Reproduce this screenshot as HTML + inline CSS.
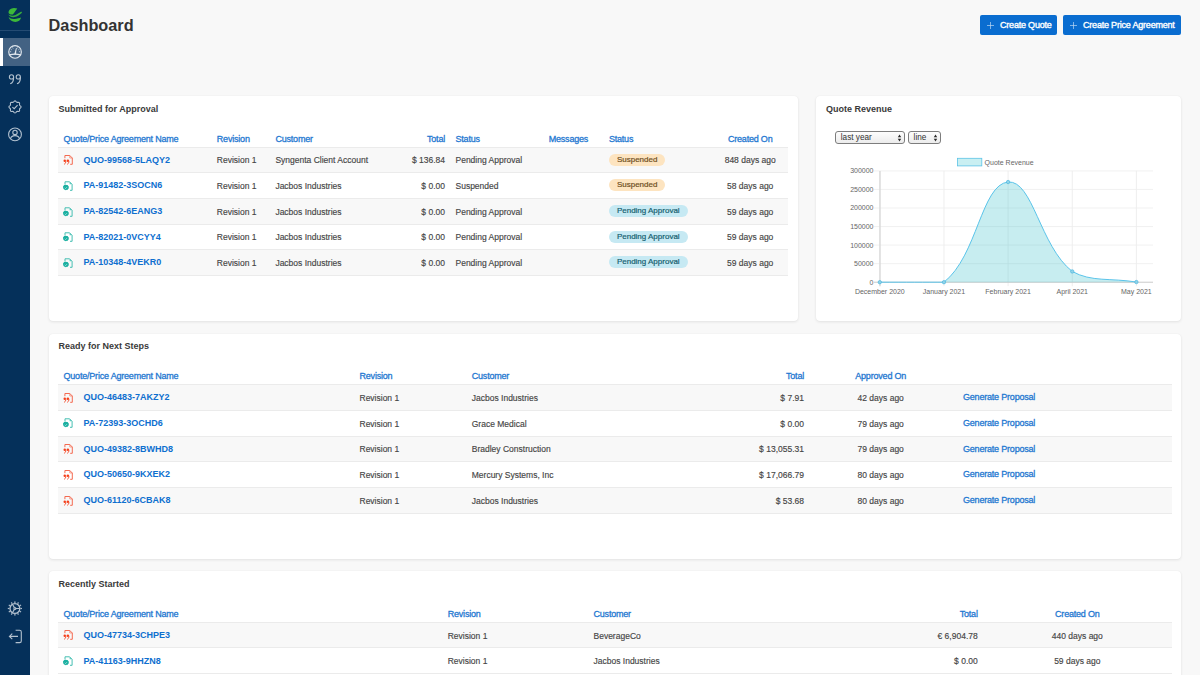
<!DOCTYPE html>
<html><head><meta charset="utf-8"><style>
*{box-sizing:border-box;margin:0;padding:0}
html,body{width:1200px;height:675px;overflow:hidden;background:#f8f8f8;font-family:"Liberation Sans",sans-serif;position:relative}
.sb{position:absolute;left:0;top:0;width:30px;height:675px;background:#05305a}
.card{position:absolute;background:#fff;border-radius:4px;box-shadow:0 1px 3px rgba(0,0,0,0.09),0 0 1px rgba(0,0,0,0.06)}
.t{position:absolute;white-space:nowrap;line-height:0;height:0}
.c{text-align:center}
.hdr{font:9px "Liberation Sans",sans-serif;color:#1f78d1;letter-spacing:-0.2px;-webkit-text-stroke:0.3px #1f78d1}
.link{font:bold 9px "Liberation Sans",sans-serif;color:#0e6fcf}
.gen{font:9px "Liberation Sans",sans-serif;color:#1f78d1;letter-spacing:-0.2px;-webkit-text-stroke:0.3px #1f78d1}
.body{font:8.5px "Liberation Sans",sans-serif;color:#454545;-webkit-text-stroke:0.15px #454545}
.ttl{font:bold 9px "Liberation Sans",sans-serif;color:#3a3a3a}
.row{position:absolute}
.hl{position:absolute;height:1px;background:#ebebeb}
.ic{position:absolute}
.badge{position:absolute;height:12px;border-radius:6px;padding:0 8px;font:8px "Liberation Sans",sans-serif;line-height:12.4px;white-space:nowrap}
.bs{background:#fde4c0;color:#6f4f22;-webkit-text-stroke:0.2px #6f4f22}
.bp{background:#c6e9f3;color:#155f70;-webkit-text-stroke:0.2px #155f70}
.btn{position:absolute;top:15px;height:19.8px;background:#0a6dd0;border-radius:2px;color:#fff}
.btn span{position:absolute;top:4.8px;font:9px "Liberation Sans",sans-serif;letter-spacing:-0.2px;-webkit-text-stroke:0.35px #fff;white-space:nowrap}
.sel{position:absolute;top:130.6px;height:13px;border:0.9px solid #7d7d7d;border-radius:3px;background:linear-gradient(#fdfdfd,#ececec);font:8.2px "Liberation Sans",sans-serif;color:#333}
.sel span{position:absolute;left:4.6px;top:1.5px}
.sel i{position:absolute;top:3px;width:0;height:0;border-left:1.7px solid transparent;border-right:1.7px solid transparent}
svg text{font-family:"Liberation Sans",sans-serif;font-size:7px;fill:#666}
</style></head><body>
<div class="sb">
 <svg style="position:absolute;left:0;top:0" width="30" height="30" viewBox="0 0 30 30">
  <path d="M8.6 12.8C8.2 10.2 10.6 8 14 7.9C15.2 7.9 16.4 8.1 17.3 8.4L12.9 14.5C10.8 14.9 8.9 14.2 8.6 12.8Z" fill="#3db83a"/>
  <path d="M8.3 14.6C10.5 16 13 16.1 15.5 15L21 11.8C21.8 11.4 22.2 12.2 21.7 12.9C19.8 14.8 17.5 16.2 14.6 17C12 17.6 9.4 16.6 8.3 14.6Z" fill="#3db83a" opacity="0.9"/>
  <path d="M8.6 17.1C10 18.6 12 19.2 14.4 19C17 18.8 19.4 18.2 21.1 17.6C20.6 20.2 18.3 21.9 15.4 21.9C12 21.9 9.3 19.9 8.6 17.1Z" fill="#3db83a"/>
 </svg>
 <div style="position:absolute;left:0;top:30px;width:30px;height:1px;background:#244b73"></div>
 <div style="position:absolute;left:0;top:38px;width:30px;height:27.5px;background:#436283"></div>
 <div style="position:absolute;left:0;top:38px;width:2.8px;height:27.5px;background:#fff"></div>
 <svg style="position:absolute;left:0;top:38px" width="30" height="28" viewBox="0 38 30 28">
  <circle cx="15.05" cy="51.9" r="6.3" fill="none" stroke="#e2e8ee" stroke-width="1.15"/>
  <path d="M9.4 54.9Q15 53.3 20.7 54.9" fill="none" stroke="#e2e8ee" stroke-width="1.3"/>
  <path d="M14.2 54.4Q15.2 51 16 48L16.8 48.3Q16.1 51.5 16 54.4Z" fill="#e2e8ee"/>
  <path d="M11.15 51.76L9.95 51.72M11.74 49.83L10.72 49.20M13.10 48.52L12.50 47.48M17.00 48.52L17.60 47.48M18.36 49.83L19.38 49.20M18.95 51.76L20.15 51.72" stroke="#e2e8ee" stroke-width="0.75"/>
 </svg>
 <svg style="position:absolute;left:0;top:65px" width="31" height="80" viewBox="0 65 31 80">
  <g fill="none" stroke="#b3c1cf" stroke-width="1.1">
   <circle cx="11.5" cy="76.9" r="2.1"/><path d="M13.6 76.9Q13.8 82.4 10.2 83.8"/>
   <circle cx="18.3" cy="76.9" r="2.1"/><path d="M20.4 76.9Q20.6 82.4 17 83.8"/>
   <path d="M15.00 100.85 L15.39 100.94 L15.75 101.17 L16.07 101.51 L16.35 101.85 L16.61 102.14 L16.89 102.33 L17.22 102.39 L17.61 102.38 L18.06 102.33 L18.52 102.32 L18.94 102.41 L19.28 102.62 L19.49 102.96 L19.58 103.38 L19.57 103.84 L19.52 104.29 L19.51 104.68 L19.57 105.01 L19.76 105.29 L20.05 105.55 L20.39 105.83 L20.73 106.15 L20.96 106.51 L21.05 106.90 L20.96 107.29 L20.73 107.65 L20.39 107.97 L20.05 108.25 L19.76 108.51 L19.57 108.79 L19.51 109.12 L19.52 109.51 L19.57 109.96 L19.58 110.42 L19.49 110.84 L19.28 111.18 L18.94 111.39 L18.52 111.48 L18.06 111.47 L17.61 111.42 L17.22 111.41 L16.89 111.47 L16.61 111.66 L16.35 111.95 L16.07 112.29 L15.75 112.63 L15.39 112.86 L15.00 112.95 L14.61 112.86 L14.25 112.63 L13.93 112.29 L13.65 111.95 L13.39 111.66 L13.11 111.47 L12.78 111.41 L12.39 111.42 L11.94 111.47 L11.48 111.48 L11.06 111.39 L10.72 111.18 L10.51 110.84 L10.42 110.42 L10.43 109.96 L10.48 109.51 L10.49 109.12 L10.43 108.79 L10.24 108.51 L9.95 108.25 L9.61 107.97 L9.27 107.65 L9.04 107.29 L8.95 106.90 L9.04 106.51 L9.27 106.15 L9.61 105.83 L9.95 105.55 L10.24 105.29 L10.43 105.01 L10.49 104.68 L10.48 104.29 L10.43 103.84 L10.42 103.38 L10.51 102.96 L10.72 102.62 L11.06 102.41 L11.48 102.32 L11.94 102.33 L12.39 102.38 L12.78 102.39 L13.11 102.33 L13.39 102.14 L13.65 101.85 L13.93 101.51 L14.25 101.17 L14.61 100.94 L15.00 100.85Z"/>
   <path d="M12.4 107.1L14.2 108.7L17.6 105.2"/>
   <circle cx="15" cy="134.4" r="6.4"/>
   <circle cx="15" cy="132.4" r="2.2"/>
   <path d="M10.5 138.8Q11.2 135.6 15 135.6Q18.8 135.6 19.5 138.8"/>
  </g>
 </svg>
 <svg style="position:absolute;left:0;top:595px" width="31" height="55" viewBox="0 595 31 55">
  <g fill="none" stroke="#b3c1cf" stroke-width="1.1">
   <circle cx="14.9" cy="608.5" r="4.9" stroke-width="1.3"/>
   <circle cx="14.9" cy="608.5" r="1"/>
   <path d="M15.4 608.5L19.9 608.5M14.4 607.6L12.4 604.2M14.4 609.4L12.4 612.8"/>
   <path d="M9.4 636.4H18M12.3 633.6L9.4 636.4L12.3 639.2"/>
   <path d="M15.6 630.2H19.6Q21.3 630.2 21.3 631.9V640.9Q21.3 642.6 19.6 642.6H15.6"/>
  </g>
  <g fill="#aebccb">
   <rect x="14.3" y="601.4" width="1.2" height="1.6" transform="rotate(0 14.9 608.5)"/><rect x="14.3" y="601.4" width="1.2" height="1.6" transform="rotate(30 14.9 608.5)"/><rect x="14.3" y="601.4" width="1.2" height="1.6" transform="rotate(60 14.9 608.5)"/><rect x="14.3" y="601.4" width="1.2" height="1.6" transform="rotate(90 14.9 608.5)"/><rect x="14.3" y="601.4" width="1.2" height="1.6" transform="rotate(120 14.9 608.5)"/><rect x="14.3" y="601.4" width="1.2" height="1.6" transform="rotate(150 14.9 608.5)"/><rect x="14.3" y="601.4" width="1.2" height="1.6" transform="rotate(180 14.9 608.5)"/><rect x="14.3" y="601.4" width="1.2" height="1.6" transform="rotate(210 14.9 608.5)"/><rect x="14.3" y="601.4" width="1.2" height="1.6" transform="rotate(240 14.9 608.5)"/><rect x="14.3" y="601.4" width="1.2" height="1.6" transform="rotate(270 14.9 608.5)"/><rect x="14.3" y="601.4" width="1.2" height="1.6" transform="rotate(300 14.9 608.5)"/><rect x="14.3" y="601.4" width="1.2" height="1.6" transform="rotate(330 14.9 608.5)"/>
  </g>
 </svg>
</div>

<div class="t" style="left:48.6px;top:15.8px;font:bold 16.3px 'Liberation Sans',sans-serif;color:#333">Dashboard</div>

<div class="btn" style="left:980px;width:77px">
 <svg style="position:absolute;left:7px;top:6.5px" width="7" height="7" viewBox="0 0 7 7"><path d="M3.5 0V7M0 3.5H7" stroke="#b9d5f2" stroke-width="0.7"/></svg>
 <span style="left:20px">Create Quote</span></div>
<div class="btn" style="left:1063px;width:118px">
 <svg style="position:absolute;left:7.2px;top:6.5px" width="7" height="7" viewBox="0 0 7 7"><path d="M3.5 0V7M0 3.5H7" stroke="#b9d5f2" stroke-width="0.7"/></svg>
 <span style="left:20px">Create Price Agreement</span></div>

<div class="card" style="left:49px;top:96px;width:749px;height:225px"></div>
<div class="card" style="left:816px;top:96px;width:365px;height:225px"></div>
<div class="card" style="left:49px;top:333.6px;width:1132px;height:225.4px"></div>
<div class="card" style="left:49px;top:571.2px;width:1132px;height:200px"></div>

<div class="t ttl" style="left:58.5px;top:103.82px">Submitted for Approval</div>
<div class="t ttl" style="left:826px;top:103.82px">Quote Revenue</div>
<div class="t ttl" style="left:58.5px;top:341.32px">Ready for Next Steps</div>
<div class="t ttl" style="left:58.5px;top:578.92px">Recently Started</div>

<div class="t hdr" style="left:63.5px;top:133.52px">Quote/Price Agreement Name</div>
<div class="t hdr" style="left:216.8px;top:133.52px">Revision</div>
<div class="t hdr" style="left:275.4px;top:133.52px">Customer</div>
<div class="t hdr" style="right:755px;top:133.52px">Total</div>
<div class="t hdr" style="left:455.5px;top:133.52px">Status</div>
<div class="t hdr" style="left:548.7px;top:133.52px">Messages</div>
<div class="t hdr" style="left:608.9px;top:133.52px">Status</div>
<div class="t hdr c" style="left:650.2px;width:200px;top:133.52px">Created On</div>
<div class="row" style="left:58px;top:147.00px;width:730px;height:25.7px;background:#f8f8f8"></div>
<div class="hl" style="left:58px;top:146.50px;width:730px"></div>
<svg class="ic" style="left:63.3px;top:155.1px" width="10" height="10" viewBox="0 0 10 10"><path d="M1.9 3.2V0.5H6.8L9.3 3V9.3H7.2" fill="none" stroke="#f36248" stroke-width="0.95" stroke-linejoin="miter"/><path d="M6.8 0.5V3H9.3" fill="none" stroke="#f57a62" stroke-width="0.7"/><circle cx="1.75" cy="5.8" r="1.25" fill="#f53d18"/><path d="M2.9 5.9Q3.1 8.6 1 9.4" fill="none" stroke="#f4583a" stroke-width="0.95"/><circle cx="4.85" cy="5.8" r="1.25" fill="#f53d18"/><path d="M6 5.9Q6.2 8.6 4.1 9.4" fill="none" stroke="#f4583a" stroke-width="0.95"/></svg>
<div class="t link" style="left:83.5px;top:154.62px">QUO-99568-5LAQY2</div>
<div class="t body" style="left:216.8px;top:155.38px">Revision 1</div>
<div class="t body" style="left:275.4px;top:155.38px">Syngenta Client Account</div>
<div class="t body" style="right:755px;top:155.38px">$ 136.84</div>
<div class="t body" style="left:455.5px;top:155.38px">Pending Approval</div>
<div class="badge bs" style="left:608.9px;top:153.60px">Suspended</div>
<div class="t body c" style="left:650.2px;width:200px;top:155.38px">848 days ago</div>
<div class="row" style="left:58px;top:172.70px;width:730px;height:25.7px;background:#ffffff"></div>
<div class="hl" style="left:58px;top:172.20px;width:730px"></div>
<svg class="ic" style="left:63.3px;top:180.79999999999998px" width="10" height="10" viewBox="0 0 10 10"><path d="M2 3.6V0.8H6.6L9.1 3.3V9.3H7" fill="none" stroke="#3dbcaf" stroke-width="0.95" stroke-linejoin="miter"/><path d="M6.6 0.8V3.3H9.1Z" fill="#5fc9bf"/><path d="M2.8 3.7L3.7 4L4.6 3.9L5.1 4.7L5.8 5.4L5.7 6.3L5.9 7.2L5.2 7.8L4.8 8.7L3.8 8.8L2.8 9.3L1.9 8.8L1 8.6L0.6 7.8L0 7.1L0.2 6.2L0 5.3L0.6 4.7L1.1 3.9L2 4Z" fill="#1bb0a1"/><path d="M1.8 6.8L2.6 7.6L4 6.1" fill="none" stroke="#d9f3f0" stroke-width="0.6"/></svg>
<div class="t link" style="left:83.5px;top:180.32px">PA-91482-3SOCN6</div>
<div class="t body" style="left:216.8px;top:181.08px">Revision 1</div>
<div class="t body" style="left:275.4px;top:181.08px">Jacbos Industries</div>
<div class="t body" style="right:755px;top:181.08px">$ 0.00</div>
<div class="t body" style="left:455.5px;top:181.08px">Suspended</div>
<div class="badge bs" style="left:608.9px;top:179.30px">Suspended</div>
<div class="t body c" style="left:650.2px;width:200px;top:181.08px">58 days ago</div>
<div class="row" style="left:58px;top:198.40px;width:730px;height:25.7px;background:#f8f8f8"></div>
<div class="hl" style="left:58px;top:197.90px;width:730px"></div>
<svg class="ic" style="left:63.3px;top:206.5px" width="10" height="10" viewBox="0 0 10 10"><path d="M2 3.6V0.8H6.6L9.1 3.3V9.3H7" fill="none" stroke="#3dbcaf" stroke-width="0.95" stroke-linejoin="miter"/><path d="M6.6 0.8V3.3H9.1Z" fill="#5fc9bf"/><path d="M2.8 3.7L3.7 4L4.6 3.9L5.1 4.7L5.8 5.4L5.7 6.3L5.9 7.2L5.2 7.8L4.8 8.7L3.8 8.8L2.8 9.3L1.9 8.8L1 8.6L0.6 7.8L0 7.1L0.2 6.2L0 5.3L0.6 4.7L1.1 3.9L2 4Z" fill="#1bb0a1"/><path d="M1.8 6.8L2.6 7.6L4 6.1" fill="none" stroke="#d9f3f0" stroke-width="0.6"/></svg>
<div class="t link" style="left:83.5px;top:206.02px">PA-82542-6EANG3</div>
<div class="t body" style="left:216.8px;top:206.78px">Revision 1</div>
<div class="t body" style="left:275.4px;top:206.78px">Jacbos Industries</div>
<div class="t body" style="right:755px;top:206.78px">$ 0.00</div>
<div class="t body" style="left:455.5px;top:206.78px">Pending Approval</div>
<div class="badge bp" style="left:608.9px;top:205.00px">Pending Approval</div>
<div class="t body c" style="left:650.2px;width:200px;top:206.78px">59 days ago</div>
<div class="row" style="left:58px;top:224.10px;width:730px;height:25.7px;background:#ffffff"></div>
<div class="hl" style="left:58px;top:223.60px;width:730px"></div>
<svg class="ic" style="left:63.3px;top:232.2px" width="10" height="10" viewBox="0 0 10 10"><path d="M2 3.6V0.8H6.6L9.1 3.3V9.3H7" fill="none" stroke="#3dbcaf" stroke-width="0.95" stroke-linejoin="miter"/><path d="M6.6 0.8V3.3H9.1Z" fill="#5fc9bf"/><path d="M2.8 3.7L3.7 4L4.6 3.9L5.1 4.7L5.8 5.4L5.7 6.3L5.9 7.2L5.2 7.8L4.8 8.7L3.8 8.8L2.8 9.3L1.9 8.8L1 8.6L0.6 7.8L0 7.1L0.2 6.2L0 5.3L0.6 4.7L1.1 3.9L2 4Z" fill="#1bb0a1"/><path d="M1.8 6.8L2.6 7.6L4 6.1" fill="none" stroke="#d9f3f0" stroke-width="0.6"/></svg>
<div class="t link" style="left:83.5px;top:231.72px">PA-82021-0VCYY4</div>
<div class="t body" style="left:216.8px;top:232.48px">Revision 1</div>
<div class="t body" style="left:275.4px;top:232.48px">Jacbos Industries</div>
<div class="t body" style="right:755px;top:232.48px">$ 0.00</div>
<div class="t body" style="left:455.5px;top:232.48px">Pending Approval</div>
<div class="badge bp" style="left:608.9px;top:230.70px">Pending Approval</div>
<div class="t body c" style="left:650.2px;width:200px;top:232.48px">59 days ago</div>
<div class="row" style="left:58px;top:249.80px;width:730px;height:25.7px;background:#f8f8f8"></div>
<div class="hl" style="left:58px;top:249.30px;width:730px"></div>
<svg class="ic" style="left:63.3px;top:257.90000000000003px" width="10" height="10" viewBox="0 0 10 10"><path d="M2 3.6V0.8H6.6L9.1 3.3V9.3H7" fill="none" stroke="#3dbcaf" stroke-width="0.95" stroke-linejoin="miter"/><path d="M6.6 0.8V3.3H9.1Z" fill="#5fc9bf"/><path d="M2.8 3.7L3.7 4L4.6 3.9L5.1 4.7L5.8 5.4L5.7 6.3L5.9 7.2L5.2 7.8L4.8 8.7L3.8 8.8L2.8 9.3L1.9 8.8L1 8.6L0.6 7.8L0 7.1L0.2 6.2L0 5.3L0.6 4.7L1.1 3.9L2 4Z" fill="#1bb0a1"/><path d="M1.8 6.8L2.6 7.6L4 6.1" fill="none" stroke="#d9f3f0" stroke-width="0.6"/></svg>
<div class="t link" style="left:83.5px;top:257.42px">PA-10348-4VEKR0</div>
<div class="t body" style="left:216.8px;top:258.18px">Revision 1</div>
<div class="t body" style="left:275.4px;top:258.18px">Jacbos Industries</div>
<div class="t body" style="right:755px;top:258.18px">$ 0.00</div>
<div class="t body" style="left:455.5px;top:258.18px">Pending Approval</div>
<div class="badge bp" style="left:608.9px;top:256.40px">Pending Approval</div>
<div class="t body c" style="left:650.2px;width:200px;top:258.18px">59 days ago</div>
<div class="hl" style="left:58px;top:275.00px;width:730px"></div>
<div class="t hdr" style="left:63.5px;top:371.12px">Quote/Price Agreement Name</div>
<div class="t hdr" style="left:359.5px;top:371.12px">Revision</div>
<div class="t hdr" style="left:471.75px;top:371.12px">Customer</div>
<div class="t hdr" style="right:396px;top:371.12px">Total</div>
<div class="t hdr c" style="left:780.7px;width:200px;top:371.12px">Approved On</div>
<div class="row" style="left:58px;top:384.60px;width:1114px;height:25.7px;background:#f8f8f8"></div>
<div class="hl" style="left:58px;top:384.10px;width:1114px"></div>
<svg class="ic" style="left:63.3px;top:392.70000000000005px" width="10" height="10" viewBox="0 0 10 10"><path d="M1.9 3.2V0.5H6.8L9.3 3V9.3H7.2" fill="none" stroke="#f36248" stroke-width="0.95" stroke-linejoin="miter"/><path d="M6.8 0.5V3H9.3" fill="none" stroke="#f57a62" stroke-width="0.7"/><circle cx="1.75" cy="5.8" r="1.25" fill="#f53d18"/><path d="M2.9 5.9Q3.1 8.6 1 9.4" fill="none" stroke="#f4583a" stroke-width="0.95"/><circle cx="4.85" cy="5.8" r="1.25" fill="#f53d18"/><path d="M6 5.9Q6.2 8.6 4.1 9.4" fill="none" stroke="#f4583a" stroke-width="0.95"/></svg>
<div class="t link" style="left:83.5px;top:392.22px">QUO-46483-7AKZY2</div>
<div class="t body" style="left:359.5px;top:392.98px">Revision 1</div>
<div class="t body" style="left:471.75px;top:392.98px">Jacbos Industries</div>
<div class="t body" style="right:396px;top:392.98px">$ 7.91</div>
<div class="t body c" style="left:780.7px;width:200px;top:392.98px">42 days ago</div>
<div class="t gen" style="left:963px;top:392.22px">Generate Proposal</div>
<div class="row" style="left:58px;top:410.30px;width:1114px;height:25.7px;background:#ffffff"></div>
<div class="hl" style="left:58px;top:409.80px;width:1114px"></div>
<svg class="ic" style="left:63.3px;top:418.40000000000003px" width="10" height="10" viewBox="0 0 10 10"><path d="M2 3.6V0.8H6.6L9.1 3.3V9.3H7" fill="none" stroke="#3dbcaf" stroke-width="0.95" stroke-linejoin="miter"/><path d="M6.6 0.8V3.3H9.1Z" fill="#5fc9bf"/><path d="M2.8 3.7L3.7 4L4.6 3.9L5.1 4.7L5.8 5.4L5.7 6.3L5.9 7.2L5.2 7.8L4.8 8.7L3.8 8.8L2.8 9.3L1.9 8.8L1 8.6L0.6 7.8L0 7.1L0.2 6.2L0 5.3L0.6 4.7L1.1 3.9L2 4Z" fill="#1bb0a1"/><path d="M1.8 6.8L2.6 7.6L4 6.1" fill="none" stroke="#d9f3f0" stroke-width="0.6"/></svg>
<div class="t link" style="left:83.5px;top:417.92px">PA-72393-3OCHD6</div>
<div class="t body" style="left:359.5px;top:418.68px">Revision 1</div>
<div class="t body" style="left:471.75px;top:418.68px">Grace Medical</div>
<div class="t body" style="right:396px;top:418.68px">$ 0.00</div>
<div class="t body c" style="left:780.7px;width:200px;top:418.68px">79 days ago</div>
<div class="t gen" style="left:963px;top:417.92px">Generate Proposal</div>
<div class="row" style="left:58px;top:436.00px;width:1114px;height:25.7px;background:#f8f8f8"></div>
<div class="hl" style="left:58px;top:435.50px;width:1114px"></div>
<svg class="ic" style="left:63.3px;top:444.1px" width="10" height="10" viewBox="0 0 10 10"><path d="M1.9 3.2V0.5H6.8L9.3 3V9.3H7.2" fill="none" stroke="#f36248" stroke-width="0.95" stroke-linejoin="miter"/><path d="M6.8 0.5V3H9.3" fill="none" stroke="#f57a62" stroke-width="0.7"/><circle cx="1.75" cy="5.8" r="1.25" fill="#f53d18"/><path d="M2.9 5.9Q3.1 8.6 1 9.4" fill="none" stroke="#f4583a" stroke-width="0.95"/><circle cx="4.85" cy="5.8" r="1.25" fill="#f53d18"/><path d="M6 5.9Q6.2 8.6 4.1 9.4" fill="none" stroke="#f4583a" stroke-width="0.95"/></svg>
<div class="t link" style="left:83.5px;top:443.62px">QUO-49382-8BWHD8</div>
<div class="t body" style="left:359.5px;top:444.38px">Revision 1</div>
<div class="t body" style="left:471.75px;top:444.38px">Bradley Construction</div>
<div class="t body" style="right:396px;top:444.38px">$ 13,055.31</div>
<div class="t body c" style="left:780.7px;width:200px;top:444.38px">79 days ago</div>
<div class="t gen" style="left:963px;top:443.62px">Generate Proposal</div>
<div class="row" style="left:58px;top:461.70px;width:1114px;height:25.7px;background:#ffffff"></div>
<div class="hl" style="left:58px;top:461.20px;width:1114px"></div>
<svg class="ic" style="left:63.3px;top:469.80000000000007px" width="10" height="10" viewBox="0 0 10 10"><path d="M1.9 3.2V0.5H6.8L9.3 3V9.3H7.2" fill="none" stroke="#f36248" stroke-width="0.95" stroke-linejoin="miter"/><path d="M6.8 0.5V3H9.3" fill="none" stroke="#f57a62" stroke-width="0.7"/><circle cx="1.75" cy="5.8" r="1.25" fill="#f53d18"/><path d="M2.9 5.9Q3.1 8.6 1 9.4" fill="none" stroke="#f4583a" stroke-width="0.95"/><circle cx="4.85" cy="5.8" r="1.25" fill="#f53d18"/><path d="M6 5.9Q6.2 8.6 4.1 9.4" fill="none" stroke="#f4583a" stroke-width="0.95"/></svg>
<div class="t link" style="left:83.5px;top:469.32px">QUO-50650-9KXEK2</div>
<div class="t body" style="left:359.5px;top:470.08px">Revision 1</div>
<div class="t body" style="left:471.75px;top:470.08px">Mercury Systems, Inc</div>
<div class="t body" style="right:396px;top:470.08px">$ 17,066.79</div>
<div class="t body c" style="left:780.7px;width:200px;top:470.08px">80 days ago</div>
<div class="t gen" style="left:963px;top:469.32px">Generate Proposal</div>
<div class="row" style="left:58px;top:487.40px;width:1114px;height:25.7px;background:#f8f8f8"></div>
<div class="hl" style="left:58px;top:486.90px;width:1114px"></div>
<svg class="ic" style="left:63.3px;top:495.50000000000006px" width="10" height="10" viewBox="0 0 10 10"><path d="M1.9 3.2V0.5H6.8L9.3 3V9.3H7.2" fill="none" stroke="#f36248" stroke-width="0.95" stroke-linejoin="miter"/><path d="M6.8 0.5V3H9.3" fill="none" stroke="#f57a62" stroke-width="0.7"/><circle cx="1.75" cy="5.8" r="1.25" fill="#f53d18"/><path d="M2.9 5.9Q3.1 8.6 1 9.4" fill="none" stroke="#f4583a" stroke-width="0.95"/><circle cx="4.85" cy="5.8" r="1.25" fill="#f53d18"/><path d="M6 5.9Q6.2 8.6 4.1 9.4" fill="none" stroke="#f4583a" stroke-width="0.95"/></svg>
<div class="t link" style="left:83.5px;top:495.02px">QUO-61120-6CBAK8</div>
<div class="t body" style="left:359.5px;top:495.78px">Revision 1</div>
<div class="t body" style="left:471.75px;top:495.78px">Jacbos Industries</div>
<div class="t body" style="right:396px;top:495.78px">$ 53.68</div>
<div class="t body c" style="left:780.7px;width:200px;top:495.78px">80 days ago</div>
<div class="t gen" style="left:963px;top:495.02px">Generate Proposal</div>
<div class="hl" style="left:58px;top:512.60px;width:1114px"></div>
<div class="t hdr" style="left:63.5px;top:608.72px">Quote/Price Agreement Name</div>
<div class="t hdr" style="left:447.7px;top:608.72px">Revision</div>
<div class="t hdr" style="left:593.5px;top:608.72px">Customer</div>
<div class="t hdr" style="right:222.29999999999995px;top:608.72px">Total</div>
<div class="t hdr c" style="left:977.3px;width:200px;top:608.72px">Created On</div>
<div class="row" style="left:58px;top:622.20px;width:1114px;height:25.7px;background:#f8f8f8"></div>
<div class="hl" style="left:58px;top:621.70px;width:1114px"></div>
<svg class="ic" style="left:63.3px;top:630.3000000000001px" width="10" height="10" viewBox="0 0 10 10"><path d="M1.9 3.2V0.5H6.8L9.3 3V9.3H7.2" fill="none" stroke="#f36248" stroke-width="0.95" stroke-linejoin="miter"/><path d="M6.8 0.5V3H9.3" fill="none" stroke="#f57a62" stroke-width="0.7"/><circle cx="1.75" cy="5.8" r="1.25" fill="#f53d18"/><path d="M2.9 5.9Q3.1 8.6 1 9.4" fill="none" stroke="#f4583a" stroke-width="0.95"/><circle cx="4.85" cy="5.8" r="1.25" fill="#f53d18"/><path d="M6 5.9Q6.2 8.6 4.1 9.4" fill="none" stroke="#f4583a" stroke-width="0.95"/></svg>
<div class="t link" style="left:83.5px;top:629.82px">QUO-47734-3CHPE3</div>
<div class="t body" style="left:447.7px;top:630.58px">Revision 1</div>
<div class="t body" style="left:593.5px;top:630.58px">BeverageCo</div>
<div class="t body" style="right:222.29999999999995px;top:630.58px">&euro; 6,904.78</div>
<div class="t body c" style="left:977.3px;width:200px;top:630.58px">440 days ago</div>
<div class="row" style="left:58px;top:647.90px;width:1114px;height:25.7px;background:#ffffff"></div>
<div class="hl" style="left:58px;top:647.40px;width:1114px"></div>
<svg class="ic" style="left:63.3px;top:656.0000000000001px" width="10" height="10" viewBox="0 0 10 10"><path d="M2 3.6V0.8H6.6L9.1 3.3V9.3H7" fill="none" stroke="#3dbcaf" stroke-width="0.95" stroke-linejoin="miter"/><path d="M6.6 0.8V3.3H9.1Z" fill="#5fc9bf"/><path d="M2.8 3.7L3.7 4L4.6 3.9L5.1 4.7L5.8 5.4L5.7 6.3L5.9 7.2L5.2 7.8L4.8 8.7L3.8 8.8L2.8 9.3L1.9 8.8L1 8.6L0.6 7.8L0 7.1L0.2 6.2L0 5.3L0.6 4.7L1.1 3.9L2 4Z" fill="#1bb0a1"/><path d="M1.8 6.8L2.6 7.6L4 6.1" fill="none" stroke="#d9f3f0" stroke-width="0.6"/></svg>
<div class="t link" style="left:83.5px;top:655.52px">PA-41163-9HHZN8</div>
<div class="t body" style="left:447.7px;top:656.28px">Revision 1</div>
<div class="t body" style="left:593.5px;top:656.28px">Jacbos Industries</div>
<div class="t body" style="right:222.29999999999995px;top:656.28px">$ 0.00</div>
<div class="t body c" style="left:977.3px;width:200px;top:656.28px">59 days ago</div>
<div class="hl" style="left:58px;top:673.10px;width:1114px"></div>

<div class="sel" style="left:835.2px;width:69.4px"><span>last year</span><svg style="position:absolute;left:60.7px;top:2.6px" width="5" height="8" viewBox="0 0 5 8"><path d="M2.5 0.6L4.2 3.2H0.8Z M2.5 7.4L4.2 4.8H0.8Z" fill="#2a2a2a"/></svg></div>
<div class="sel" style="left:908px;width:33px"><span>line</span><svg style="position:absolute;left:24px;top:2.6px" width="5" height="8" viewBox="0 0 5 8"><path d="M2.5 0.6L4.2 3.2H0.8Z M2.5 7.4L4.2 4.8H0.8Z" fill="#2a2a2a"/></svg></div>

<svg style="position:absolute;left:0;top:0" width="1200" height="675" viewBox="0 0 1200 675">
 <rect x="957.4" y="158.3" width="24.4" height="7.6" fill="#c9eff2" stroke="#5cc3e6" stroke-width="0.8"/>
 <text x="984.6" y="164.6">Quote Revenue</text>
 <line x1="874" y1="282.20" x2="1153" y2="282.20" stroke="#efefef" stroke-width="0.9"/><text x="873.5" y="284.60" text-anchor="end">0</text><line x1="874" y1="263.65" x2="1153" y2="263.65" stroke="#efefef" stroke-width="0.9"/><text x="873.5" y="266.05" text-anchor="end">50000</text><line x1="874" y1="245.10" x2="1153" y2="245.10" stroke="#efefef" stroke-width="0.9"/><text x="873.5" y="247.50" text-anchor="end">100000</text><line x1="874" y1="226.55" x2="1153" y2="226.55" stroke="#efefef" stroke-width="0.9"/><text x="873.5" y="228.95" text-anchor="end">150000</text><line x1="874" y1="208.00" x2="1153" y2="208.00" stroke="#efefef" stroke-width="0.9"/><text x="873.5" y="210.40" text-anchor="end">200000</text><line x1="874" y1="189.45" x2="1153" y2="189.45" stroke="#efefef" stroke-width="0.9"/><text x="873.5" y="191.85" text-anchor="end">250000</text><line x1="874" y1="170.90" x2="1153" y2="170.90" stroke="#efefef" stroke-width="0.9"/><text x="873.5" y="173.30" text-anchor="end">300000</text><line x1="879.80" y1="170.90" x2="879.80" y2="286.20" stroke="#ececec" stroke-width="0.9"/><line x1="943.95" y1="170.90" x2="943.95" y2="286.20" stroke="#ececec" stroke-width="0.9"/><line x1="1008.10" y1="170.90" x2="1008.10" y2="286.20" stroke="#ececec" stroke-width="0.9"/><line x1="1072.25" y1="170.90" x2="1072.25" y2="286.20" stroke="#ececec" stroke-width="0.9"/><line x1="1136.40" y1="170.90" x2="1136.40" y2="286.20" stroke="#ececec" stroke-width="0.9"/><text x="879.80" y="294.2" text-anchor="middle">December 2020</text><text x="943.95" y="294.2" text-anchor="middle">January 2021</text><text x="1008.10" y="294.2" text-anchor="middle">February 2021</text><text x="1072.25" y="294.2" text-anchor="middle">April 2021</text><text x="1136.40" y="294.2" text-anchor="middle">May 2021</text><line x1="880" y1="170.90" x2="880" y2="286.20" stroke="#d6d6d6" stroke-width="1.2"/><line x1="874" y1="282.20" x2="1153" y2="282.20" stroke="#cfcfcf" stroke-width="1.1"/>
 <path d="M879.80 282.20 C905.46 282.20 925.97 282.20 943.95 282.20 C977.29 256.17 981.44 184.27 1008.10 182.03 C1032.76 179.96 1039.99 246.29 1072.25 271.44 C1091.31 282.20 1110.74 277.81 1136.40 282.05 L1136.40 282.20 L879.80 282.20 Z" fill="rgba(54,190,200,0.28)"/>
 <path d="M879.80 282.20 C905.46 282.20 925.97 282.20 943.95 282.20 C977.29 256.17 981.44 184.27 1008.10 182.03 C1032.76 179.96 1039.99 246.29 1072.25 271.44 C1091.31 282.20 1110.74 277.81 1136.40 282.05" fill="none" stroke="#5ac4ea" stroke-width="1"/>
 <circle cx="879.80" cy="282.20" r="1.7" fill="#8fd3e8" stroke="#4fb8e0" stroke-width="0.7"/><circle cx="943.95" cy="282.20" r="1.7" fill="#8fd3e8" stroke="#4fb8e0" stroke-width="0.7"/><circle cx="1008.10" cy="182.03" r="1.7" fill="#8fd3e8" stroke="#4fb8e0" stroke-width="0.7"/><circle cx="1072.25" cy="271.44" r="1.7" fill="#8fd3e8" stroke="#4fb8e0" stroke-width="0.7"/><circle cx="1136.40" cy="282.05" r="1.7" fill="#8fd3e8" stroke="#4fb8e0" stroke-width="0.7"/>
</svg>
</body></html>
